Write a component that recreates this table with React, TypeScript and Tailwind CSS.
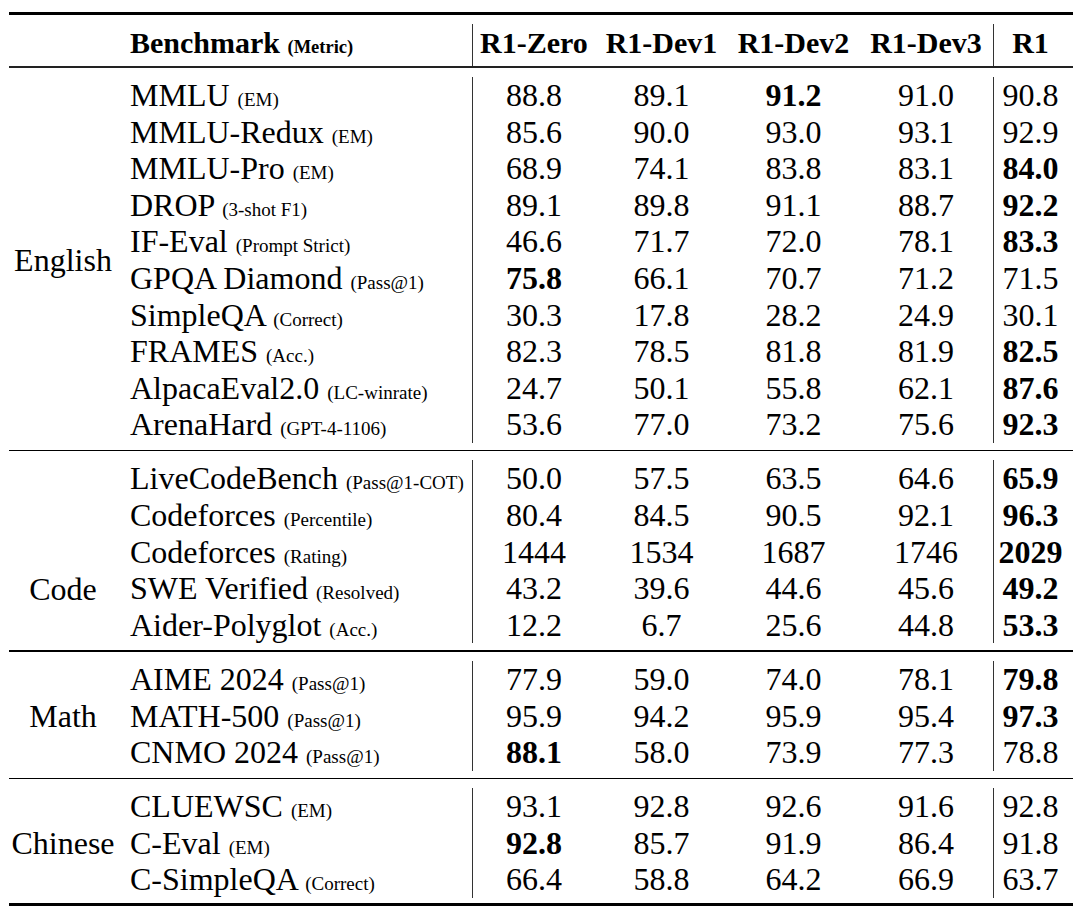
import React from "react";

type Row = { name: string; metric: string; vals: string[]; bold: number };
type Section = { label: string; labelRow: number; labelSpan: number; rows: Row[] };

const sections: Section[] = [
  {
    label: "English",
    labelRow: 1,
    labelSpan: 10,
    rows: [
      { name: "MMLU", metric: "(EM)", vals: ["88.8", "89.1", "91.2", "91.0", "90.8"], bold: 2 },
      { name: "MMLU-Redux", metric: "(EM)", vals: ["85.6", "90.0", "93.0", "93.1", "92.9"], bold: -1 },
      { name: "MMLU-Pro", metric: "(EM)", vals: ["68.9", "74.1", "83.8", "83.1", "84.0"], bold: 4 },
      { name: "DROP", metric: "(3-shot F1)", vals: ["89.1", "89.8", "91.1", "88.7", "92.2"], bold: 4 },
      { name: "IF-Eval", metric: "(Prompt Strict)", vals: ["46.6", "71.7", "72.0", "78.1", "83.3"], bold: 4 },
      { name: "GPQA Diamond", metric: "(Pass@1)", vals: ["75.8", "66.1", "70.7", "71.2", "71.5"], bold: 0 },
      { name: "SimpleQA", metric: "(Correct)", vals: ["30.3", "17.8", "28.2", "24.9", "30.1"], bold: -1 },
      { name: "FRAMES", metric: "(Acc.)", vals: ["82.3", "78.5", "81.8", "81.9", "82.5"], bold: 4 },
      { name: "AlpacaEval2.0", metric: "(LC-winrate)", vals: ["24.7", "50.1", "55.8", "62.1", "87.6"], bold: 4 },
      { name: "ArenaHard", metric: "(GPT-4-1106)", vals: ["53.6", "77.0", "73.2", "75.6", "92.3"], bold: 4 },
    ],
  },
  {
    label: "Code",
    labelRow: 4,
    labelSpan: 1,
    rows: [
      { name: "LiveCodeBench", metric: "(Pass@1-COT)", vals: ["50.0", "57.5", "63.5", "64.6", "65.9"], bold: 4 },
      { name: "Codeforces", metric: "(Percentile)", vals: ["80.4", "84.5", "90.5", "92.1", "96.3"], bold: 4 },
      { name: "Codeforces", metric: "(Rating)", vals: ["1444", "1534", "1687", "1746", "2029"], bold: 4 },
      { name: "SWE Verified", metric: "(Resolved)", vals: ["43.2", "39.6", "44.6", "45.6", "49.2"], bold: 4 },
      { name: "Aider-Polyglot", metric: "(Acc.)", vals: ["12.2", "6.7", "25.6", "44.8", "53.3"], bold: 4 },
    ],
  },
  {
    label: "Math",
    labelRow: 2,
    labelSpan: 1,
    rows: [
      { name: "AIME 2024", metric: "(Pass@1)", vals: ["77.9", "59.0", "74.0", "78.1", "79.8"], bold: 4 },
      { name: "MATH-500", metric: "(Pass@1)", vals: ["95.9", "94.2", "95.9", "95.4", "97.3"], bold: 4 },
      { name: "CNMO 2024", metric: "(Pass@1)", vals: ["88.1", "58.0", "73.9", "77.3", "78.8"], bold: 0 },
    ],
  },
  {
    label: "Chinese",
    labelRow: 2,
    labelSpan: 1,
    rows: [
      { name: "CLUEWSC", metric: "(EM)", vals: ["93.1", "92.8", "92.6", "91.6", "92.8"], bold: -1 },
      { name: "C-Eval", metric: "(EM)", vals: ["92.8", "85.7", "91.9", "86.4", "91.8"], bold: 0 },
      { name: "C-SimpleQA", metric: "(Correct)", vals: ["66.4", "58.8", "64.2", "66.9", "63.7"], bold: -1 },
    ],
  },
];

const labelClass: Record<string, string> = {
  English: "col-start-1 row-start-1 row-span-10",
  Code: "col-start-1 row-start-4 row-span-1",
  Math: "col-start-1 row-start-2 row-span-1",
  Chinese: "col-start-1 row-start-2 row-span-1",
};

const GRID = "grid grid-cols-[108px_355px_123px_133px_131px_134px_74px]";

function SectionBlock({ s }: { s: Section }) {
  return (
    <div className={`${GRID} auto-rows-[36.6px]`}>
      <div className={`${labelClass[s.label]} flex items-center justify-center text-[32px] leading-none`}>
        {s.label}
      </div>
      {s.rows.map((r, i) => (
        <React.Fragment key={i}>
          <div className="col-start-2 pl-[13px] text-[32px] leading-[36.6px] whitespace-nowrap">
            {r.name} <span className="text-[19px]">{r.metric}</span>
          </div>
          {r.vals.map((v, j) => (
            <div
              key={j}
              className={`text-center text-[32px] leading-[36.6px] ${j === 0 || j === 4 ? "border-l border-[#333]" : ""} ${
                j === r.bold ? "font-bold" : ""
              }`}
            >
              {v}
            </div>
          ))}
        </React.Fragment>
      ))}
    </div>
  );
}

export default function App() {
  return (
    <div className="w-[1079px] h-[920px] bg-white pt-[12px] pl-[9px] text-black font-['Liberation_Serif',serif]">
      <div className="w-[1064px]">
        <div className="h-[3px] bg-black" />
        <div className={`${GRID} h-[37px] mt-[9px] font-bold text-[30px] leading-[37px]`}>
          <div />
          <div className="pl-[13px] whitespace-nowrap">
            Benchmark <span className="text-[18.5px]">(Metric)</span>
          </div>
          <div className="text-center border-l border-[#333] whitespace-nowrap">R1-Zero</div>
          <div className="text-center whitespace-nowrap">R1-Dev1</div>
          <div className="text-center whitespace-nowrap">R1-Dev2</div>
          <div className="text-center whitespace-nowrap">R1-Dev3</div>
          <div className="text-center border-l border-[#333]">R1</div>
        </div>
        <div className="h-[2px] bg-[#222] mt-[5px]" />
        {sections.map((s, i) => (
          <React.Fragment key={s.label}>
            <div className="pt-[9px]">
              <SectionBlock s={s} />
            </div>
            {i < sections.length - 1 ? (
              <div className="mt-[7px] h-[1.5px] bg-black" />
            ) : null}
          </React.Fragment>
        ))}
        <div className="mt-[5px] h-[3px] bg-black" />
      </div>
    </div>
  );
}
